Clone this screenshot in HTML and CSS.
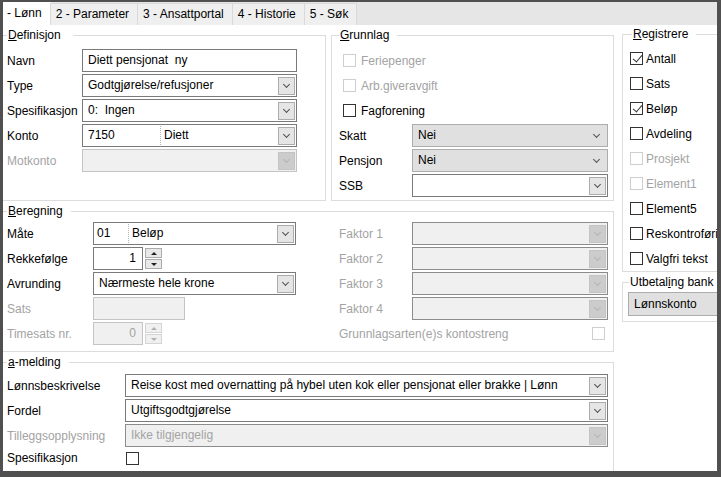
FILE: index.html
```html
<!DOCTYPE html>
<html lang="no">

<head>
    <meta charset="UTF-8">
    <title>Lønnsart</title>
    <link rel="stylesheet" href="styles.css">
</head>

<body>
<div class="window">

    <div class="tabs">
        <div class="tab active">- Lønn</div>
        <div class="tab">2 - Parameter</div>
        <div class="tab">3 - Ansattportal</div>
        <div class="tab">4 - Historie</div>
        <div class="tab">5 - Søk</div>
    </div>

    <div class="content">
        <div class="main">

            <div class="top-row">
                <!-- Definisjon -->
                <fieldset class="group def">
                    <legend><u>D</u>efinisjon</legend>
                    <div class="rows">
                        <div class="row"><span class="lbl">Navn</span><div class="field">Diett pensjonat&nbsp; ny</div></div>
                        <div class="row"><span class="lbl">Type</span><div class="field combo"><span class="val">Godtgjørelse/refusjoner</span><span class="btn"></span></div></div>
                        <div class="row"><span class="lbl">Spesifikasjon</span><div class="field combo"><span class="val">0:&nbsp; Ingen</span><span class="btn"></span></div></div>
                        <div class="row"><span class="lbl">Konto</span><div class="field combo"><span class="code">7150</span><span class="val split">Diett</span><span class="btn"></span></div></div>
                        <div class="row"><span class="lbl off">Motkonto</span><div class="field combo dis light"><span class="code"></span><span class="val split"></span><span class="btn"></span></div></div>
                    </div>
                </fieldset>

                <!-- Grunnlag -->
                <fieldset class="group grl">
                    <legend><u>G</u>runnlag</legend>
                    <div class="rows">
                        <div class="row"><span class="cb off"></span><span class="cb-text off">Feriepenger</span></div>
                        <div class="row"><span class="cb off"></span><span class="cb-text off">Arb.giveravgift</span></div>
                        <div class="row"><span class="cb"></span><span class="cb-text">Fagforening</span></div>
                        <div class="row"><span class="lbl w73">Skatt</span><div class="field combo flat"><span class="val">Nei</span><span class="btn"></span></div></div>
                        <div class="row"><span class="lbl w73">Pensjon</span><div class="field combo flat"><span class="val">Nei</span><span class="btn"></span></div></div>
                        <div class="row"><span class="lbl w73">SSB</span><div class="field combo"><span class="val"></span><span class="btn"></span></div></div>
                    </div>
                </fieldset>
            </div>

            <!-- Beregning -->
            <fieldset class="group ber">
                <legend><u>B</u>eregning</legend>
                <div class="cols">
                    <div class="rows">
                        <div class="row"><span class="lbl w86">Måte</span><div class="field combo w203"><span class="code short">01</span><span class="val split">Beløp</span><span class="btn"></span></div></div>
                        <div class="row"><span class="lbl w86">Rekkefølge</span>
                            <div class="spin"><div class="field num">1</div><div class="arrows"><span class="arrow up"></span><span class="arrow down"></span></div></div>
                        </div>
                        <div class="row"><span class="lbl w86">Avrunding</span><div class="field combo w203"><span class="val">Nærmeste hele krone</span><span class="btn"></span></div></div>
                        <div class="row"><span class="lbl w86 off">Sats</span><div class="field dis light w92"></div></div>
                        <div class="row"><span class="lbl w86 off">Timesats nr.</span>
                            <div class="spin dis-spin"><div class="field num dis light">0</div><div class="arrows"><span class="arrow up"></span><span class="arrow down"></span></div></div>
                        </div>
                    </div>
                    <div class="rows">
                        <div class="row"><span class="lbl w73 off">Faktor 1</span><div class="field combo dis"><span class="val"></span><span class="btn"></span></div></div>
                        <div class="row"><span class="lbl w73 off">Faktor 2</span><div class="field combo dis"><span class="val"></span><span class="btn"></span></div></div>
                        <div class="row"><span class="lbl w73 off">Faktor 3</span><div class="field combo dis"><span class="val"></span><span class="btn"></span></div></div>
                        <div class="row"><span class="lbl w73 off">Faktor 4</span><div class="field combo dis"><span class="val"></span><span class="btn"></span></div></div>
                        <div class="row spread"><span class="off">Grunnlagsarten(e)s kontostreng</span><span class="cb off"></span></div>
                    </div>
                </div>
            </fieldset>

            <!-- a-melding -->
            <fieldset class="group amel">
                <legend><u>a</u>-melding</legend>
                <div class="rows">
                    <div class="row"><span class="lbl w118">Lønnsbeskrivelse</span><div class="field combo"><span class="val">Reise kost med overnatting på hybel uten kok eller pensjonat eller brakke | Lønn</span><span class="btn"></span></div></div>
                    <div class="row"><span class="lbl w118">Fordel</span><div class="field combo"><span class="val">Utgiftsgodtgjørelse</span><span class="btn"></span></div></div>
                    <div class="row"><span class="lbl w118 off">Tilleggsopplysning</span><div class="field combo dis"><span class="val off">Ikke tilgjengelig</span><span class="btn"></span></div></div>
                    <div class="row short-row"><span class="lbl w118">Spesifikasjon</span><span class="cb"></span></div>
                </div>
            </fieldset>
        </div>

        <div class="side">
            <!-- Registrere -->
            <fieldset class="group reg">
                <legend><u>R</u>egistrere</legend>
                <div class="rows">
                    <div class="row"><span class="cb on"></span><span class="cb-text">Antall</span></div>
                    <div class="row"><span class="cb"></span><span class="cb-text">Sats</span></div>
                    <div class="row"><span class="cb on"></span><span class="cb-text">Beløp</span></div>
                    <div class="row"><span class="cb"></span><span class="cb-text">Avdeling</span></div>
                    <div class="row"><span class="cb off"></span><span class="cb-text off">Prosjekt</span></div>
                    <div class="row"><span class="cb off"></span><span class="cb-text off">Element1</span></div>
                    <div class="row"><span class="cb"></span><span class="cb-text">Element5</span></div>
                    <div class="row"><span class="cb"></span><span class="cb-text">Reskontroføring</span></div>
                    <div class="row"><span class="cb"></span><span class="cb-text">Valgfri tekst</span></div>
                </div>
            </fieldset>

            <!-- Utbetaling bank -->
            <fieldset class="group bank">
                <legend>Utbetal<u>i</u>ng bank</legend>
                <div class="field combo flat tall"><span class="val">Lønnskonto</span><span class="btn"></span></div>
            </fieldset>
        </div>
    </div>

</div>
</body>

</html>
```

FILE: styles.css
```css
body {
    margin: 0;
    background-color: #505050;
    font-family: 'Liberation Sans', Arial, sans-serif;
    font-size: 12px;
    color: #000;
}

.window {
    height: 477px;
    box-sizing: border-box;
    padding: 2px 4px 6px 3px;
    display: flex;
    flex-direction: column;
}

/* tabs */
.tabs {
    height: 23px;
    flex: none;
    display: flex;
    align-items: flex-end;
    background-color: #e6e6e6;
}

.tab {
    height: 22px;
    line-height: 21px;
    box-sizing: border-box;
    padding: 0 8px 0 5px;
    background-color: #efefef;
    border: 1px solid #d9d9d9;
    border-bottom: none;
    margin-left: -1px;
    white-space: nowrap;
}

.tab.active {
    height: 23px;
    line-height: 22px;
    background-color: #fff;
    border: none;
    margin-left: 0;
    padding: 0 9px 0 4px;
}

/* content */
.content {
    flex: 1;
    background-color: #fff;
    display: grid;
    grid-template-columns: 611px 120px;
    column-gap: 8px;
    overflow: hidden;
}

.main {
    display: flex;
    flex-direction: column;
}

.top-row {
    display: grid;
    grid-template-columns: 323px 283px;
    column-gap: 5px;
    margin-top: 3px;
}

.group {
    margin: 0;
    min-width: 0;
    border: 1px solid #dcdcdc;
    padding: 7px 5px 3px 7px;
}

.group legend {
    padding: 0 8px 0 1px;
    line-height: 14px;
}

.def {
    border-left: none;
    padding: 7px 28px 3px 4px;
}

.def legend {
    padding-right: 12px;
}

.ber {
    margin-top: 3px;
    border-left: none;
    padding: 4px 5px 6px 4px;
}

.amel {
    margin-top: 3px;
    flex: 1;
    border-left: none;
    border-bottom: none;
    padding: 5px 5px 0 4px;
}

.side {
    display: flex;
    flex-direction: column;
    margin-top: 2px;
}

.reg {
    padding: 6px 5px 1px 7px;
}

.reg legend {
    margin-left: 2px;
}

.bank {
    margin-top: 3px;
    padding: 3px 0 5px 5px;
}

.bank legend {
    margin-left: 1px;
}

.cols {
    display: grid;
    grid-template-columns: 332px 269px;
}

.rows {
    display: flex;
    flex-direction: column;
    gap: 2px;
}

.row {
    display: flex;
    align-items: center;
    height: 23px;
    white-space: nowrap;
}

.row.spread {
    justify-content: space-between;
    padding-right: 3px;
}

.row.short-row {
    height: 18px;
}

.lbl {
    width: 75px;
    flex: none;
}

.w73 { width: 73px; }
.w86 { width: 86px; }
.w118 { width: 118px; }

.off {
    color: #a3a3a3;
}

/* fields */
.field {
    flex: 1;
    height: 23px;
    box-sizing: border-box;
    border: 1px solid #7a7a7a;
    background-color: #fff;
    padding-left: 5px;
    line-height: 21px;
    overflow: hidden;
    white-space: nowrap;
}

.w203 { flex: none; width: 203px; }
.w92 { flex: none; width: 92px; }

.combo {
    display: flex;
    align-items: center;
    padding-left: 0;
}

.combo .val {
    flex: 1;
    padding-left: 5px;
    overflow: hidden;
}

.combo .code {
    width: 77px;
    flex: none;
    padding-left: 5px;
    box-sizing: border-box;
}

.combo .code.short {
    width: 34px;
    padding-left: 3px;
}

.combo .val.split {
    border-left: 1px dotted #b4b4b4;
    padding-left: 3px;
    line-height: 19px;
}

.combo .btn {
    flex: none;
    width: 17px;
    height: 18px;
    box-sizing: border-box;
    margin-right: 1px;
    border: 1px solid #acacac;
    background-color: #e5e5e5;
    display: flex;
    align-items: center;
    justify-content: center;
}

.combo .btn::after {
    content: '';
    width: 4px;
    height: 4px;
    margin-top: -3px;
    border-right: 1px solid #505050;
    border-bottom: 1px solid #505050;
    transform: rotate(45deg);
}

.combo.flat {
    background-color: #e0e0e0;
    border-color: #adadad;
}

.combo.flat .btn {
    border: none;
    background: none;
    margin-right: 2px;
}

.combo.tall {
    flex: none;
    height: 24px;
    width: 130px;
}

.dis {
    background-color: #f0f0f0;
    border-color: #8c8c8c;
}

.dis.light {
    border-color: #c4c4c4;
}

.combo.dis .btn {
    background-color: #cccccc;
    border-color: #c4c4c4;
}

.combo.dis .btn::after {
    border-color: #b4b4b4;
}

/* spinner */
.spin {
    display: flex;
    align-items: center;
    gap: 2px;
}

.field.num {
    flex: none;
    width: 50px;
    text-align: right;
    padding-right: 6px;
}

.arrows {
    display: flex;
    flex-direction: column;
    gap: 1px;
}

.arrow {
    width: 17px;
    height: 10px;
    box-sizing: border-box;
    border: 1px solid #acacac;
    background-color: #e8e8e8;
    display: flex;
    align-items: center;
    justify-content: center;
}

.arrow.up::after {
    content: '';
    border-left: 3px solid transparent;
    border-right: 3px solid transparent;
    border-bottom: 3px solid #222;
}

.arrow.down::after {
    content: '';
    border-left: 3px solid transparent;
    border-right: 3px solid transparent;
    border-top: 3px solid #222;
}

.dis-spin .num {
    color: #a3a3a3;
}

.dis-spin .arrow {
    border-color: #d4d4d4;
    background-color: #f0f0f0;
}

.dis-spin .arrow.up::after {
    border-bottom-color: #b0b0b0;
}

.dis-spin .arrow.down::after {
    border-top-color: #b0b0b0;
}

/* checkboxes */
.cb {
    flex: none;
    width: 13px;
    height: 13px;
    box-sizing: border-box;
    border: 1px solid #333;
    background-color: #fff;
    display: flex;
    align-items: center;
    justify-content: center;
}

.cb.off {
    border-color: #cfcfcf;
}

.cb.on::after {
    content: '';
    width: 4px;
    height: 8px;
    margin-top: -3px;
    margin-left: 1px;
    border-right: 1px solid #333;
    border-bottom: 1px solid #333;
    transform: rotate(40deg);
}

.cb-text {
    margin-left: 5px;
}

.grl .cb {
    margin-left: 4px;
}

.reg .cb-text {
    margin-left: 3px;
}

.amel .cb {
    margin-left: 1px;
}
```
